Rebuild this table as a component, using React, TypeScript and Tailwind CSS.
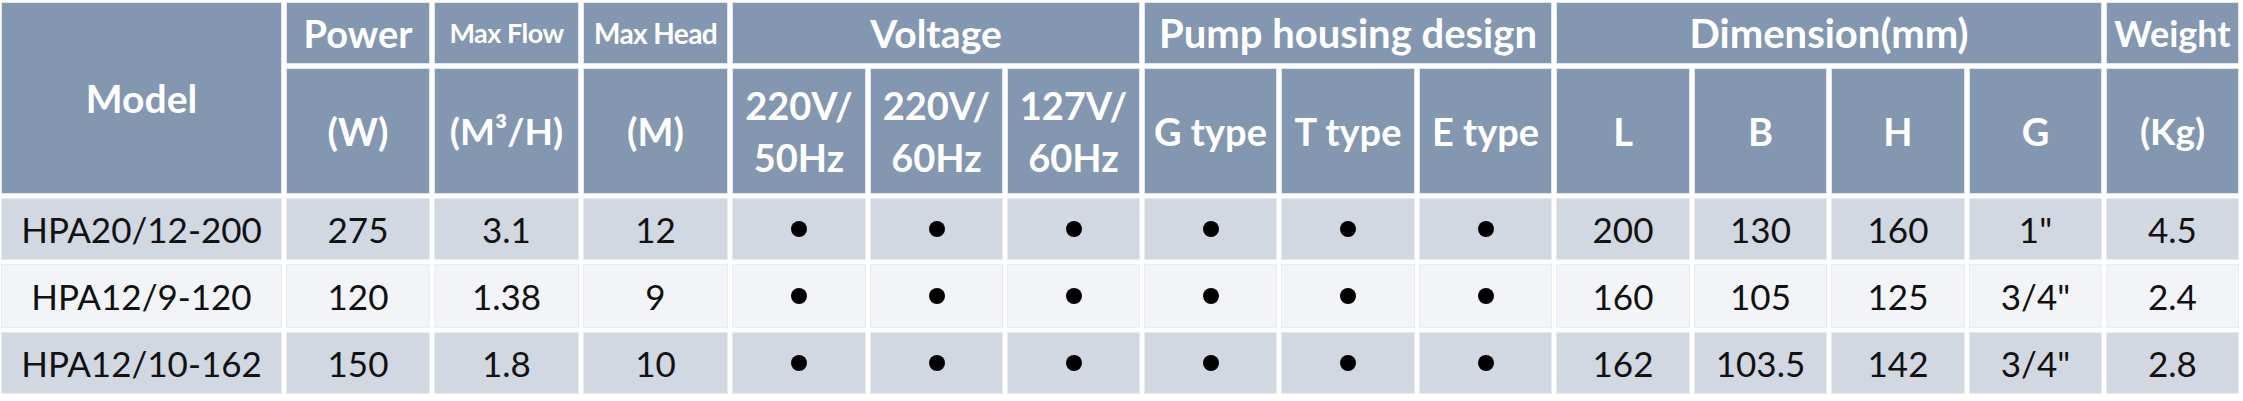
import React from "react";

const H = "bg-[#8497b0] border border-[#e3e6eb] flex items-center justify-center text-center text-white font-bold";
const DARK = "bg-[#d1d8e1] border border-[#e6e9ee] flex items-center justify-center text-center text-[#111111] text-[35px]";
const LIGHT = "bg-[#f2f4f7] border border-[#e9ecf0] flex items-center justify-center text-center text-[#111111] text-[35px]";

const rows = [
  ["HPA20/12-200", "275", "3.1", "12", "•", "•", "•", "•", "•", "•", "200", "130", "160", "1\"", "4.5"],
  ["HPA12/9-120", "120", "1.38", "9", "•", "•", "•", "•", "•", "•", "160", "105", "125", "3/4\"", "2.4"],
  ["HPA12/10-162", "150", "1.8", "10", "•", "•", "•", "•", "•", "•", "162", "103.5", "142", "3/4\"", "2.8"],
];

function Dot() {
  return <span className="block w-[16px] h-[16px] rounded-full bg-black" />;
}

export default function App() {
  return (
    <div className="w-[2243px] h-[401px] bg-white pl-[1px] pt-[2px] font-['Lato',sans-serif]">
      <div className="grid grid-cols-[281px_144px_145px_145px_134px_133px_133px_133px_134px_133px_134px_133px_134px_133px_133px] grid-rows-[62px_126px_62px_64px_62px] gap-[4px]">
        <div className={`${H} row-span-2 text-[39px]`}>Model</div>
        <div className={`${H} text-[38px]`}>Power</div>
        <div className={`${H} text-[27px] tracking-[-0.5px]`}>Max Flow</div>
        <div className={`${H} text-[28px] tracking-[-0.6px]`}>Max Head</div>
        <div className={`${H} col-span-3 text-[39px]`}>Voltage</div>
        <div className={`${H} col-span-3 text-[40px]`}>Pump housing design</div>
        <div className={`${H} col-span-4 text-[40px]`}>Dimension(mm)</div>
        <div className={`${H} text-[36px]`}>Weight</div>

        <div className={`${H} text-[38px]`}>(W)</div>
        <div className={`${H} text-[37px]`}>(M³/H)</div>
        <div className={`${H} text-[38px]`}>(M)</div>
        <div className={`${H} text-[38px] leading-[52px]`}>220V/<br />50Hz</div>
        <div className={`${H} text-[38px] leading-[52px]`}>220V/<br />60Hz</div>
        <div className={`${H} text-[38px] leading-[52px]`}>127V/<br />60Hz</div>
        <div className={`${H} text-[38px]`}>G type</div>
        <div className={`${H} text-[38px]`}>T type</div>
        <div className={`${H} text-[38px]`}>E type</div>
        <div className={`${H} text-[38px]`}>L</div>
        <div className={`${H} text-[38px]`}>B</div>
        <div className={`${H} text-[38px]`}>H</div>
        <div className={`${H} text-[38px]`}>G</div>
        <div className={`${H} text-[37px]`}>(Kg)</div>

        {rows.map((r, i) =>
          r.map((c, j) => (
            <div key={`${i}-${j}`} className={i % 2 === 0 ? DARK : LIGHT}>
              {c === "•" ? <Dot /> : c}
            </div>
          ))
        )}
      </div>
    </div>
  );
}
